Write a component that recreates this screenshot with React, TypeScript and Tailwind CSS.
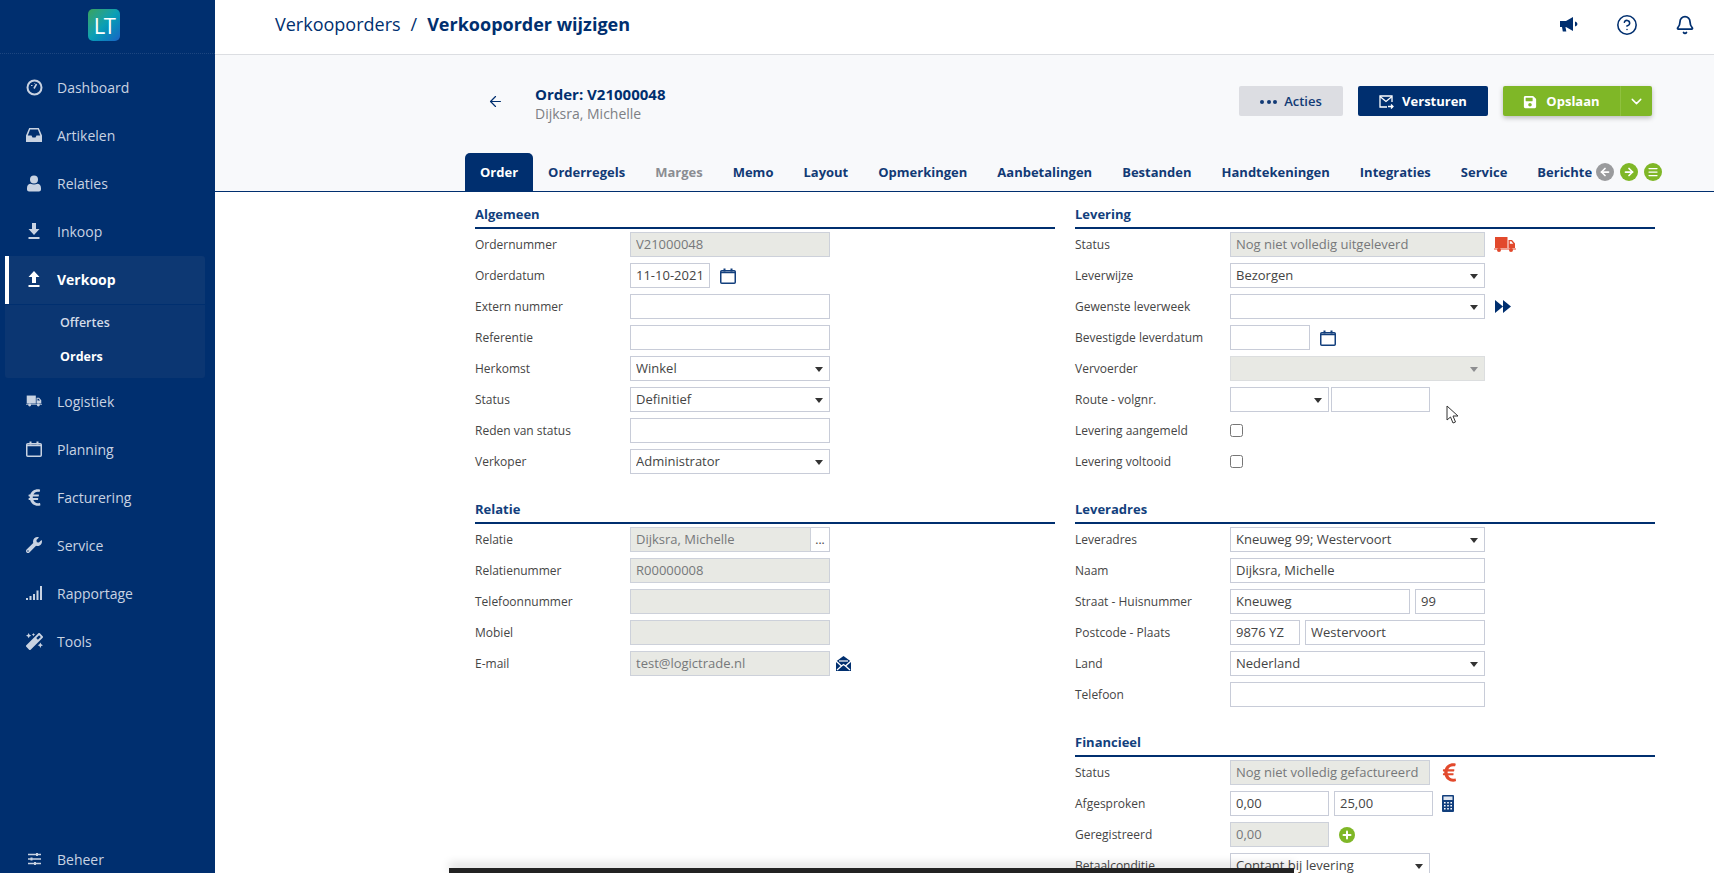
import React from 'react';
import { ArrowLeft, ArrowRight, Bell, ChevronDown, CircleHelp, Menu, Plus } from 'lucide-react';
import { FaEuroSign, FaMagic, FaSave, FaWrench } from 'react-icons/fa';

const GaugeIcon = () => (
  <svg width="17" height="17" viewBox="0 0 17 17" fill="none" stroke="currentColor">
    <circle cx="8.5" cy="8.5" r="7" strokeWidth="2" />
    <path d="M8 9.5 10.5 5" strokeWidth="1.6" />
    <path d="M5 6.5h1.5M8 4.5h.5" strokeWidth="1.2" />
  </svg>
);

const InboxIcon = () => (
  <svg width="16" height="14" viewBox="0 0 16 14" fill="currentColor">
    <path d="M3.200 0h9.600L16 7.500V14H0V7.500zm.9 1.500L1.800 7.500h3.700l1 2h3l1-2h3.700l-2.300-6z" fillRule="evenodd" />
  </svg>
);

const UserIcon = () => (
  <svg width="16" height="17" viewBox="0 0 16 17" fill="currentColor">
    <circle cx="8" cy="4.5" r="4" />
    <path d="M1 13c0-3 2-4 3.500-4.200 2 1 5 1 7 0C13 9 15 10 15 13v1.500c0 1-1 2-2 2H3c-1 0-2-1-2-2z" />
  </svg>
);

const ArrowBarIcon = ({ up }: { up?: boolean }) => (
  <svg width="12" height="16" viewBox="0 0 12 16" fill="currentColor">
    {up ? <path d="M6 0 11.500 6H8v6H4V6H.5z" /> : <path d="M4 0h4v6h3.500L6 12 .5 6H4z" />}
    <rect x="0.500" y="14" width="11" height="2" />
  </svg>
);

const CalendarIcon = ({ size = 16 }: { size?: number }) => (
  <svg width={size} height={size} viewBox="0 0 16 16" fill="none" stroke="currentColor">
    <rect x="0.750" y="2.750" width="14.500" height="12.500" rx="1" strokeWidth="1.500" />
    <path d="M1 4.500h14" strokeWidth="1.500" />
    <path d="M4.500 0.500v3M11.500 0.500v3" strokeWidth="2" />
  </svg>
);

const BarsIcon = () => (
  <svg width="16" height="14" viewBox="0 0 16 14" fill="currentColor">
    <rect x="0" y="12" width="2" height="2" />
    <rect x="3.500" y="10" width="2" height="4" />
    <rect x="7" y="8" width="2" height="6" />
    <rect x="10.500" y="4.500" width="2" height="9.500" />
    <rect x="14" y="0" width="2" height="14" />
  </svg>
);

const SlidersIcon = () => (
  <svg width="13" height="12" viewBox="0 0 13 12" fill="none" stroke="currentColor" strokeWidth="1.400">
    <path d="M0 1.500h13M0 6h13M0 10.500h13" />
    <path d="M9 0v3M3.500 4.500v3M7 9v3" strokeWidth="2" />
  </svg>
);

const SendMailIcon = () => (
  <svg width="15" height="14" viewBox="0 0 15 14" fill="none" stroke="currentColor" strokeWidth="1.300">
    <path d="M8 12H1V1h12v6" />
    <path d="m1 1.500 6 5 6-5" />
    <path d="M9 11.500h5M12 9.500l2 2-2 2" fill="none" />
  </svg>
);

const MegaphoneIcon = () => (
  <svg width="18" height="15" viewBox="0 0 18 15" fill="currentColor">
    <path d="M0 4h6l7-4v14l-7-4H5.500l.8 4.500H2.800L2 10H0z" />
    <path d="M15 4.500c1.600.6 2.400 1.500 2.400 2.500S16.600 8.900 15 9.500z" />
  </svg>
);

const OpenMailIcon = () => (
  <svg width="15" height="15" viewBox="0 0 15 15">
    <path d="M7.500 0 15 5.500V15H0V5.500z" fill="#002f6f" />
    <path d="M0 5 5.500 10 1 14M15 5 9.500 10 14 14M5.500 10l2-1.500 2 1.500" fill="none" stroke="white" strokeWidth="1.300" />
    <path d="M3 5h9" stroke="white" strokeWidth="1.200" />
  </svg>
);

const CalculatorIcon = () => (
  <svg width="12" height="17" viewBox="0 0 12 17">
    <rect width="12" height="17" rx="1" fill="#123f7d" />
    <rect x="1.500" y="1.500" width="9" height="3.500" fill="#dfe6f0" />
    <path d="M2 7h1.600v1.600H2zM5.200 7h1.600v1.600H5.200zM8.400 7H10v1.600H8.400zM2 10h1.600v1.600H2zM5.200 10h1.600v1.600H5.200zM8.400 10H10v1.600H8.400zM2 13h1.600v1.600H2zM5.200 13h1.600v1.600H5.200zM8.400 13H10v1.600H8.400z" fill="white" />
  </svg>
);

const DoubleArrowIcon = () => (
  <svg width="16" height="13" viewBox="0 0 16 13" fill="#002f6f">
    <path d="M0 0l8 6.500L0 13zM8 0l8 6.500L8 13z" />
  </svg>
);

// box truck, cargo on the left and cab on the right
const TruckIcon = ({ width = 16, height = 12 }: { width?: number; height?: number }) => (
  <svg width={width} height={height} viewBox="0 0 22 15" fill="currentColor">
    <rect x="1" y="0" width="12.500" height="11" />
    <path d="M14.500 3h3.500l3 3.500V11h-6.500zM15.800 4.300v2.500h3.500l-2-2.500z" fillRule="evenodd" />
    <rect x="0" y="11.500" width="22" height="1" />
    <circle cx="5" cy="13" r="2" />
    <circle cx="17" cy="13" r="2" />
  </svg>
);

const sideItems = [
  { label: 'Dashboard', icon: <GaugeIcon /> },
  { label: 'Artikelen', icon: <InboxIcon /> },
  { label: 'Relaties', icon: <UserIcon /> },
  { label: 'Inkoop', icon: <ArrowBarIcon /> },
];

const sideItemsBelow = [
  { label: 'Logistiek', icon: <TruckIcon /> },
  { label: 'Planning', icon: <CalendarIcon /> },
  { label: 'Facturering', icon: <FaEuroSign size={19} /> },
  { label: 'Service', icon: <FaWrench size={16} /> },
  { label: 'Rapportage', icon: <BarsIcon /> },
  { label: 'Tools', icon: <FaMagic size={17} /> },
];

const SideLink = ({ label, icon }: { label: string; icon: React.ReactNode }) => (
  <div className="flex h-12 items-center pb-[2px] text-[14px] text-[#c9d3e2]">
    <span className="flex w-[57px] shrink-0 justify-center pl-[22px] pr-[11px]">{icon}</span>
    <span>{label}</span>
  </div>
);

const Sidebar = () => (
  <aside className="flex h-[873px] w-[215px] shrink-0 flex-col overflow-hidden bg-[#002f6f]">
    <div className="flex h-[54px] shrink-0 items-start justify-center border-b border-dotted border-[#1d4680] pt-[9px] pr-[7px]">
      <div className="flex h-8 w-8 items-center justify-center rounded-[5px] bg-gradient-to-br from-[#3aa35a] via-[#0a9fb5] to-[#1b62c4] text-[22px] leading-none font-medium tracking-[-1.500px] text-white">
        LT
      </div>
    </div>
    <nav className="flex flex-1 flex-col pt-[10px]">
      {sideItems.map((item) => (
        <SideLink key={item.label} {...item} />
      ))}
      <div className="relative mx-[5px] flex h-12 w-[200px] items-center rounded-t-[3px] bg-[#0d3873] pb-[2px] text-[14px] font-bold text-white">
        <span className="absolute top-0 bottom-0 left-0 w-1 bg-white" />
        <span className="flex w-[52px] shrink-0 justify-center pl-[18px] pr-[12px]">
          <ArrowBarIcon up />
        </span>
        <span>Verkoop</span>
      </div>
      <div className="mx-[5px] mt-px h-[73px] w-[200px] rounded-b-[3px] bg-[#0b3672] pt-px pl-[55px] text-[12.500px] font-semibold">
        <div className="flex h-[34px] items-center text-[#d4dce8]">Offertes</div>
        <div className="flex h-[34px] items-center font-bold text-white">Orders</div>
      </div>
      {sideItemsBelow.map((item) => (
        <SideLink key={item.label} {...item} />
      ))}
      <div className="mt-auto flex h-[26px] items-center pb-[2px] text-[14px] text-[#c9d3e2]">
        <span className="flex w-[57px] shrink-0 justify-center pl-[22px] pr-[11px]">
          <SlidersIcon />
        </span>
        <span>Beheer</span>
      </div>
    </nav>
  </aside>
);

const TopBar = () => (
  <header className="flex h-[55px] shrink-0 items-center border-b border-[#dcdee2] bg-white pb-[5px] pl-[60px] text-[18px] text-[#002f6f]">
    <span>Verkooporders</span>
    <span className="mx-[10px]">/</span>
    <span className="font-bold">Verkooporder wijzigen</span>
    <div className="ml-auto flex items-center pr-[19px]">
      <span className="mr-[38px]">
        <MegaphoneIcon />
      </span>
      <CircleHelp size={22} strokeWidth={1.700} className="mr-[37px]" />
      <Bell size={20} strokeWidth={2.100} />
    </div>
  </header>
);

const tabs = ['Orderregels', 'Marges', 'Memo', 'Layout', 'Opmerkingen', 'Aanbetalingen', 'Bestanden', 'Handtekeningen', 'Integraties', 'Service', 'Berichten'];

const PageHead = () => (
  <div className="h-[137px] shrink-0 border-b border-[#002f6f] bg-[#f8f9fb] pt-[31px]">
    <div className="ml-[250px] w-[1197px]">
      <div className="flex h-[30px] items-center pr-[10px]">
        <ArrowLeft size={17} strokeWidth={1.700} className="ml-[22px] mr-[31px] text-[#002f6f]" />
        <div className="pt-[6px]">
          <div className="text-[15px] leading-[19px] font-bold text-[#002f6f]">Order: V21000048</div>
          <div className="text-[14px] leading-[19px] text-[#7d7f84]">Dijksra, Michelle</div>
        </div>
        <button className="ml-auto flex h-[30px] w-[104px] items-center justify-center rounded-[2px] bg-[#dcdde2] pt-px text-[13px] font-semibold text-[#123a75]">
          <span className="mr-[7px] flex gap-[2.500px]">
            <span className="h-1 w-1 rounded-full bg-[#123a75]" />
            <span className="h-1 w-1 rounded-full bg-[#123a75]" />
            <span className="h-1 w-1 rounded-full bg-[#123a75]" />
          </span>
          Acties
        </button>
        <button className="ml-[15px] flex h-[30px] w-[130px] items-center justify-center rounded-[2px] bg-[#002f6f] pt-px text-[13px] font-bold text-white">
          <span className="mr-[8px]">
            <SendMailIcon />
          </span>
          Versturen
        </button>
        <div className="ml-[15px] flex h-[30px] w-[149px] rounded-[2px] bg-[#7fb727] text-[13px] font-bold text-white shadow-[0_2px_5px_rgba(0,0,0,0.25)]">
          <button className="flex w-[118px] items-center justify-center border-r border-[#8fc13f] pt-px">
            <FaSave size={14} className="mr-[9px]" />
            Opslaan
          </button>
          <button className="flex flex-1 items-center justify-center">
            <ChevronDown size={17} strokeWidth={2} />
          </button>
        </div>
      </div>
      <div className="mt-[37px] flex h-[38px] items-center">
        <div className="flex h-[38px] min-w-0 flex-1 overflow-hidden text-[13px] font-bold whitespace-nowrap text-[#123a75]">
          <div className="flex items-center rounded-t-[5px] bg-[#002f6f] px-[15px] pt-[2px] text-white">Order</div>
          {tabs.map((tab) => (
            <div key={tab} className={tab === 'Marges' ? 'flex items-center px-[15px] pt-[2px] text-[#8b8d92]' : 'flex items-center px-[15px] pt-[2px]'}>
              {tab}
            </div>
          ))}
        </div>
        <div className="ml-[4px] flex gap-[6px] text-white">
          <span className="flex h-[18px] w-[18px] items-center justify-center rounded-full bg-[#9a9b9d]">
            <ArrowLeft size={12} strokeWidth={3.500} />
          </span>
          <span className="flex h-[18px] w-[18px] items-center justify-center rounded-full bg-[#7fb727]">
            <ArrowRight size={12} strokeWidth={3.500} />
          </span>
          <span className="flex h-[18px] w-[18px] items-center justify-center rounded-full bg-[#7fb727]">
            <Menu size={12} strokeWidth={2.500} />
          </span>
        </div>
      </div>
    </div>
  </div>
);

const Section = ({ title, children }: { title: string; children: React.ReactNode }) => (
  <section className="mb-[20px]">
    <h3 className="mb-[3px] h-[24px] border-b-2 border-[#002f6f] text-[13px] leading-[18px] font-bold text-[#123f7d]">{title}</h3>
    <div className="flex flex-col gap-[6px]">{children}</div>
  </section>
);

const Row = ({ label, children }: { label: string; children?: React.ReactNode }) => (
  <div className="flex h-[25px] items-center text-[12px]">
    <span className="w-[155px] shrink-0 text-[#454545]">{label}</span>
    {children}
  </div>
);

const Box = ({
  value,
  className = 'w-[200px]',
  disabled,
  select,
}: {
  value?: string;
  className?: string;
  disabled?: boolean;
  select?: boolean;
}) => (
  <div
    className={`flex h-[25px] shrink-0 items-center border pt-px pl-[5px] text-[13px] whitespace-nowrap ${className} ${
      disabled ? 'border-[#cdd1da] bg-[#e8e9e4] text-[#76787a]' : 'border-[#c8ccd8] bg-white text-[#444444]'
    }`}
  >
    <span className="flex-1 overflow-hidden">{value}</span>
    {select && <span className={`mr-[6px] h-0 w-0 border-x-[4px] border-t-[5px] border-x-transparent ${disabled ? 'border-t-[#8d8e90]' : 'border-t-[#333333]'}`} />}
  </div>
);

const Form = () => (
  <div className="ml-[260px] grid w-[1180px] grid-cols-[580px_580px] gap-x-[20px] pt-[13px]">
    <div>
      <Section title="Algemeen">
        <Row label="Ordernummer"><Box value="V21000048" disabled /></Row>
        <Row label="Orderdatum">
          <Box value="11-10-2021" className="w-[80px]" />
          <span className="ml-[10px] text-[#123f7d]"><CalendarIcon /></span>
        </Row>
        <Row label="Extern nummer"><Box /></Row>
        <Row label="Referentie"><Box /></Row>
        <Row label="Herkomst"><Box value="Winkel" select /></Row>
        <Row label="Status"><Box value="Definitief" select /></Row>
        <Row label="Reden van status"><Box /></Row>
        <Row label="Verkoper"><Box value="Administrator" select /></Row>
      </Section>
      <div className="h-[6px]" />
      <Section title="Relatie">
        <Row label="Relatie">
          <Box value="Dijksra, Michelle" className="w-[181px]" disabled />
          <div className="flex h-[25px] w-[19px] items-center justify-center border border-l-0 border-[#c8ccd8] bg-white text-[12px] text-[#444444]">...</div>
        </Row>
        <Row label="Relatienummer"><Box value="R00000008" disabled /></Row>
        <Row label="Telefoonnummer"><Box disabled /></Row>
        <Row label="Mobiel"><Box disabled /></Row>
        <Row label="E-mail">
          <Box value="test@logictrade.nl" disabled />
          <span className="ml-[6px]"><OpenMailIcon /></span>
        </Row>
      </Section>
    </div>
    <div>
      <Section title="Levering">
        <Row label="Status">
          <Box value="Nog niet volledig uitgeleverd" className="w-[255px]" disabled />
          <span className="ml-[9px] text-[#e2492c]"><TruckIcon width={22} height={15} /></span>
        </Row>
        <Row label="Leverwijze"><Box value="Bezorgen" className="w-[255px]" select /></Row>
        <Row label="Gewenste leverweek">
          <Box className="w-[255px]" select />
          <span className="ml-[10px]"><DoubleArrowIcon /></span>
        </Row>
        <Row label="Bevestigde leverdatum">
          <Box className="w-[80px]" />
          <span className="ml-[10px] text-[#123f7d]"><CalendarIcon /></span>
        </Row>
        <Row label="Vervoerder"><Box className="w-[255px] border-[#dcdedf]" disabled select /></Row>
        <Row label="Route - volgnr.">
          <Box className="w-[99px]" select />
          <Box className="ml-[2px] w-[99px]" />
        </Row>
        <Row label="Levering aangemeld"><input type="checkbox" readOnly className="m-0 h-[13px] w-[13px]" /></Row>
        <Row label="Levering voltooid"><input type="checkbox" readOnly className="m-0 h-[13px] w-[13px]" /></Row>
      </Section>
      <div className="h-[6px]" />
      <Section title="Leveradres">
        <Row label="Leveradres"><Box value="Kneuweg 99; Westervoort" className="w-[255px]" select /></Row>
        <Row label="Naam"><Box value="Dijksra, Michelle" className="w-[255px]" /></Row>
        <Row label="Straat - Huisnummer">
          <Box value="Kneuweg" className="w-[180px]" />
          <Box value="99" className="ml-[5px] w-[70px]" />
        </Row>
        <Row label="Postcode - Plaats">
          <Box value="9876 YZ" className="w-[70px]" />
          <Box value="Westervoort" className="ml-[5px] w-[180px]" />
        </Row>
        <Row label="Land"><Box value="Nederland" className="w-[255px]" select /></Row>
        <Row label="Telefoon"><Box className="w-[255px]" /></Row>
      </Section>
      <div className="h-[6px]" />
      <Section title="Financieel">
        <Row label="Status">
          <Box value="Nog niet volledig gefactureerd" disabled />
          <FaEuroSign size={21} className="ml-[9px] text-[#e2492c]" />
        </Row>
        <Row label="Afgesproken">
          <Box value="0,00" className="w-[99px]" />
          <Box value="25,00" className="ml-[5px] w-[99px]" />
          <span className="ml-[9px]"><CalculatorIcon /></span>
        </Row>
        <Row label="Geregistreerd">
          <Box value="0,00" className="w-[99px]" disabled />
          <span className="ml-[10px] flex h-4 w-4 items-center justify-center rounded-full bg-[#7fb727] text-white">
            <Plus size={12} strokeWidth={4} />
          </span>
        </Row>
        <Row label="Betaalconditie"><Box value="Contant bij levering" select /></Row>
      </Section>
    </div>
  </div>
);

export default function App() {
  return (
    <div className="relative flex h-[873px] w-[1714px] overflow-hidden bg-white font-['Open_Sans',sans-serif]">
      <Sidebar />
      <main className="flex min-w-0 flex-1 flex-col">
        <TopBar />
        <PageHead />
        <Form />
      </main>
      {/* mouse pointer caught in the capture */}
      <svg className="absolute top-[405px] left-[1446px]" width="14" height="20" viewBox="0 0 14 20" fill="white" stroke="#333333" strokeWidth="1">
        <path d="M1 1v14l3.500-3 2.500 6 2.500-1-2.500-6h5z" />
      </svg>
      {/* dark strip of the player over the bottom edge */}
      <div className="absolute top-[868px] left-[449px] h-[5px] w-[845px] bg-[#222222] shadow-[0_-4px_10px_rgba(0,0,0,0.2)]" />
    </div>
  );
}
